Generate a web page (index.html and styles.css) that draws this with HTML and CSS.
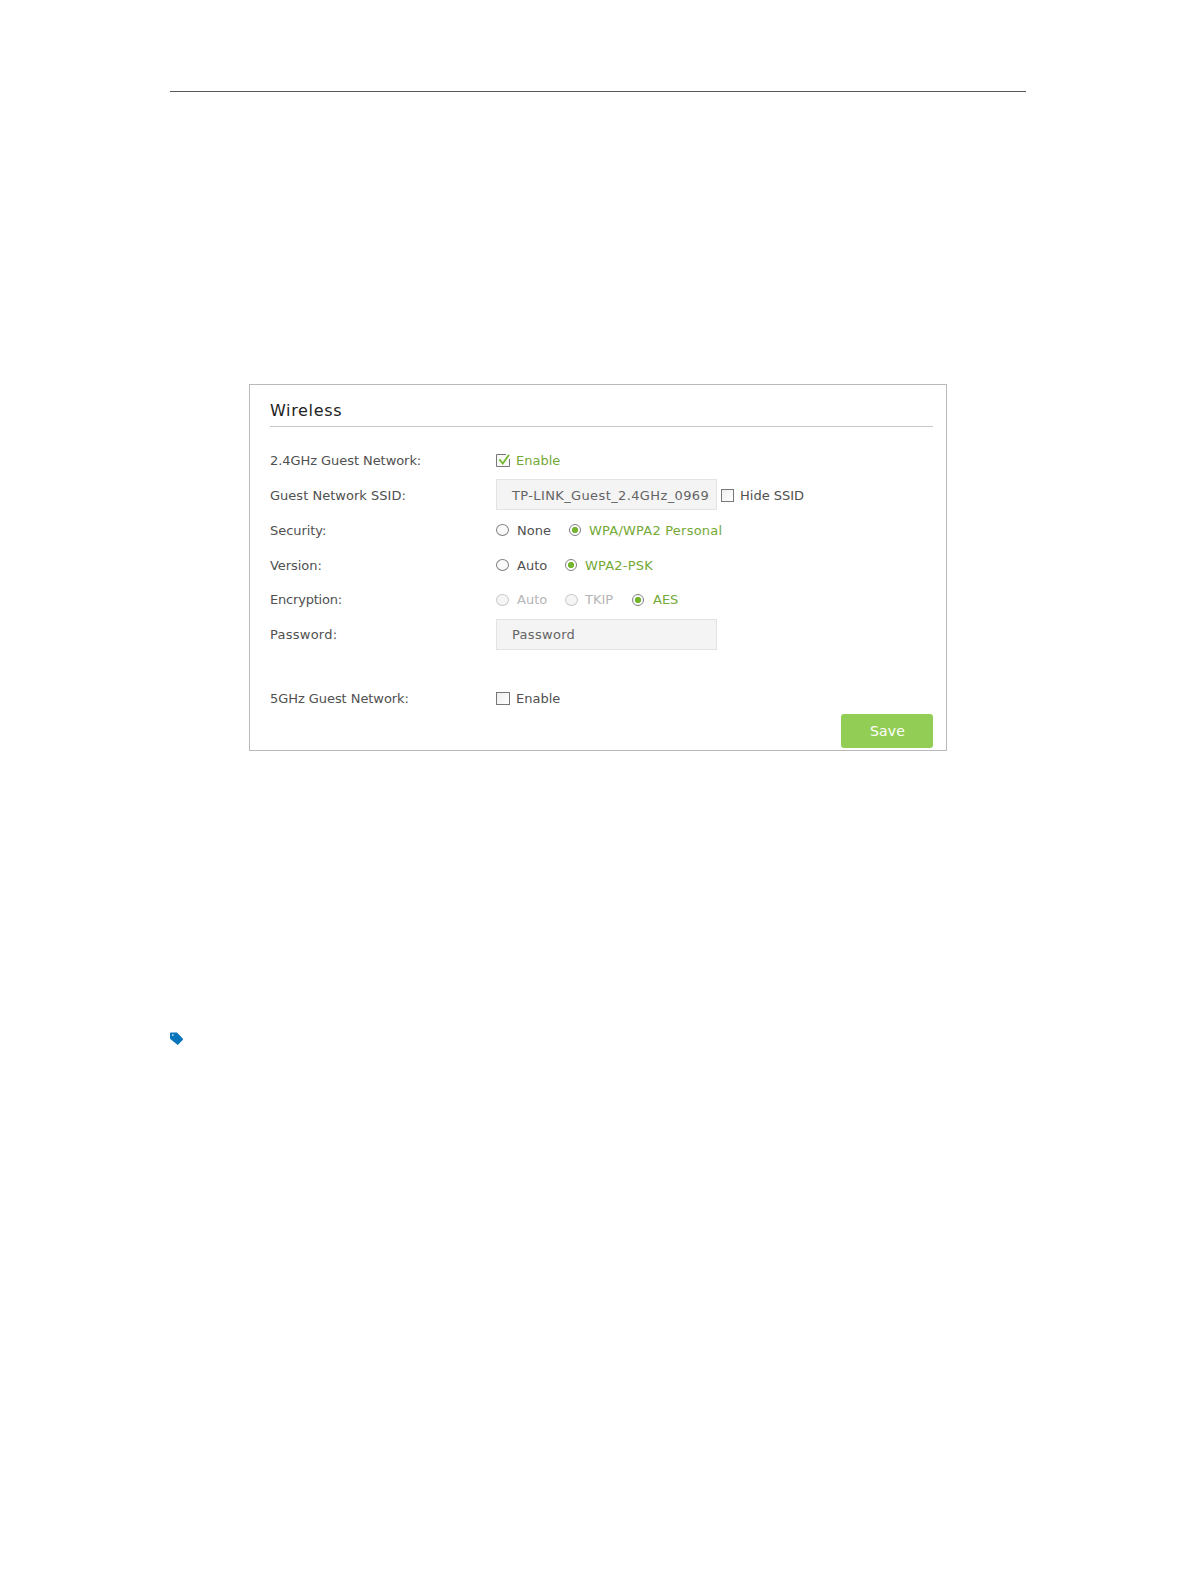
FILE: index.html
```
<!DOCTYPE html>
<html lang="en">

<head>
    <meta charset="UTF-8">
    <meta name="viewport" content="width=device-width, initial-scale=1.0">
    <title>Guest Network</title>
    <link rel="stylesheet" href="styles.css">
</head>

<body>
    <div class="page">
        <!-- Wireless Settings -->
        <form class="panel">
            <h2>Wireless</h2>
            <div class="row">
                <span class="label">2.4GHz Guest Network:</span>
                <label class="option active">
                    <svg class="check-icon" viewBox="0 0 14 14">
                        <path class="box" d="M10 .5H.5v12h13V5" />
                        <path class="tick" d="M3.3 5.3l3.5 4.2L13 .8" />
                    </svg>
                    <span>Enable</span>
                </label>
            </div>
            <div class="row">
                <span class="label ssid-label">Guest Network SSID:</span>
                <div class="field ssid">TP-LINK_Guest_2.4GHz_0969</div>
                <label class="option hide-ssid"><span class="checkbox small"></span><span>Hide SSID</span></label>
            </div>
            <div class="row">
                <span class="label">Security:</span>
                <label class="option first"><span class="radio"></span><span>None</span></label>
                <label class="option active security"><span class="radio on"></span><span>WPA/WPA2 Personal</span></label>
            </div>
            <div class="row">
                <span class="label">Version:</span>
                <label class="option first"><span class="radio"></span><span>Auto</span></label>
                <label class="option active version"><span class="radio on"></span><span>WPA2-PSK</span></label>
            </div>
            <div class="row">
                <span class="label narrow">Encryption:</span>
                <label class="option first disabled"><span class="radio"></span><span>Auto</span></label>
                <label class="option second disabled"><span class="radio"></span><span>TKIP</span></label>
                <label class="option active aes"><span class="radio on"></span><span>AES</span></label>
            </div>
            <div class="row">
                <span class="label wide">Password:</span>
                <div class="field password">Password</div>
            </div>
            <div class="row last">
                <span class="label">5GHz Guest Network:</span>
                <label class="option"><span class="checkbox"></span><span>Enable</span></label>
            </div>
            <button type="button" class="btn">Save</button>
        </form>

        <!-- Note tag -->
        <svg class="tag-icon" viewBox="0 0 14 14">
            <path d="M1 .5h6l5.700 5.900c.5.500.5 1 0 1.500L8.300 12.600c-.4.4-.8.4-1.200 0L.6 7.200C.2 6.800 0 6.400 0 5.900V1.500c0-.6.4-1 1-1z" />
            <circle cx="2.800" cy="3" r=".9" />
        </svg>
    </div>
</body>

</html>
```
FILE: styles.css
```
* {
    box-sizing: border-box;
}

body {
    margin: 0;
    background-color: #fff;
    color: #505050;
    font-family: 'DejaVu Sans', Verdana, sans-serif;
    font-size: 13px;
}

.page {
    width: 856px;
    height: 1491px;
    margin: 91px 0 0 170px;
    border-top: 1px solid #58585a;
}

/* Settings panel */
.panel {
    display: flex;
    flex-direction: column;
    width: 698px;
    height: 367px;
    margin: 292px 0 0 79px;
    padding: 0 13px 0 20px;
    border: 1px solid #b9b9b9;
}

h2 {
    height: 42px;
    margin: 0 0 15.4px;
    border-bottom: 1px solid #c6c6c6;
    color: #222;
    font-size: 16px;
    font-weight: normal;
    line-height: 51px;
    letter-spacing: 0.65px;
}

.row {
    display: flex;
    align-items: center;
    height: 34.8px;
    padding-top: 2px;
    white-space: nowrap;
}

.row.last {
    margin-top: 29px;
}

.label {
    width: 226px;
    letter-spacing: -0.06px;
}

.label.ssid-label {
    letter-spacing: 0.02px;
}

.label.wide {
    letter-spacing: 0.25px;
}

.label.narrow {
    letter-spacing: -0.2px;
}

.option {
    display: flex;
    align-items: center;
    gap: 6px;
}

.option.first {
    width: 69px;
    gap: 8px;
}

.option.security {
    margin-left: 4px;
    letter-spacing: 0.22px;
}

.option.version {
    letter-spacing: 0.2px;
}

.option.second {
    width: 67px;
    gap: 7px;
}

.option.aes {
    gap: 7px;
}

.active {
    color: #74a936;
}

.disabled {
    color: #b5b5b5;
}

/* Text fields */
.field {
    width: 221px;
    height: 31px;
    margin-bottom: 1.5px;
    padding-left: 15px;
    border: 1px solid #e3e3e3;
    background-color: #f4f4f4;
    color: #646464;
    line-height: 30px;
}

.ssid {
    line-height: 31px;
    letter-spacing: 0.38px;
}

.password {
    letter-spacing: 0.3px;
}

.hide-ssid {
    margin-left: 4px;
}

/* Checkboxes and radios */
.checkbox {
    width: 14px;
    height: 13px;
    border: 1px solid #777;
    background: linear-gradient(135deg, #eee, #fff);
}

.checkbox.small {
    width: 13px;
}

.check-icon {
    width: 14px;
    height: 14px;
}

.box {
    fill: #f8f8f8;
    stroke: #777;
}

.tick {
    fill: none;
    stroke: #74b82f;
    stroke-width: 1.8;
}

.radio {
    width: 13px;
    height: 12px;
    border: 1px solid #808080;
    border-radius: 50%;
    background-color: #fafafa;
}

.radio.on {
    width: 12px;
    margin-right: 2px;
    background: radial-gradient(circle, #74b52f 0, #74b52f 2.8px, #fff 3.5px);
}

.disabled .radio {
    border-color: #c8c8c8;
    background-color: #f5f5f5;
}

.btn {
    align-self: flex-end;
    width: 92px;
    height: 34px;
    margin-top: -1px;
    padding: 0 0 0 1px;
    border: none;
    border-radius: 3px;
    background-color: #92ce56;
    color: #fff;
    font-family: inherit;
    font-size: 14px;
    letter-spacing: 0.2px;
    cursor: pointer;
}

.tag-icon {
    display: block;
    width: 14px;
    height: 14px;
    margin-top: 281px;
    fill: #0874bb;
}

.tag-icon circle {
    fill: #b5dcf2;
}
```
